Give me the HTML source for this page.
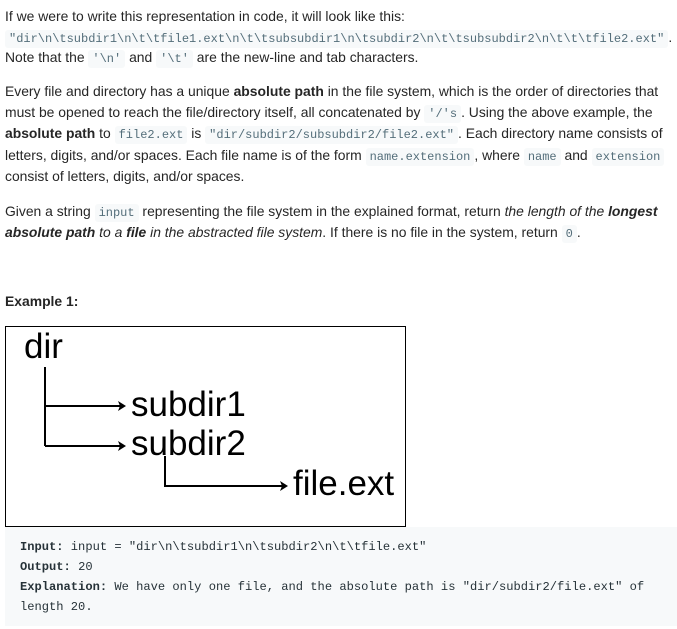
<!DOCTYPE html>
<html><head><style>
body{margin:0;width:677px;height:629px;background:#fff;position:relative;overflow:hidden;font-family:"Liberation Sans",sans-serif;font-size:13.9px;color:#262626;}
.l{position:absolute;left:5px;white-space:nowrap;line-height:20px;letter-spacing:0;}
code{font-family:"Liberation Mono",monospace;font-size:12px;color:#546e7a;background:#f7f9fa;border-radius:3px;padding:2px 4px;letter-spacing:0;}
b{color:#262626}
.pre{position:absolute;left:5px;top:527px;width:672px;height:99px;background:#f7f9fa;font-family:"Liberation Mono",monospace;font-size:12.1px;color:#263238;}
.pre div{position:absolute;left:15px;white-space:nowrap;line-height:20px}
.pre b{color:#263238}
</style></head><body>
<div class="l" style="top:6px">If we were to write this representation in code, it will look like this:</div>
<div class="l" style="top:27px"><code>"dir\n\tsubdir1\n\t\tfile1.ext\n\t\tsubsubdir1\n\tsubdir2\n\t\tsubsubdir2\n\t\t\tfile2.ext"</code>.</div>
<div class="l" style="top:47px">Note that the <code>'\n'</code> and <code>'\t'</code> are the new-line and tab characters.</div>
<div class="l" style="top:81px">Every file and directory has a unique <b>absolute path</b> in the file system, which is the order of directories that</div>
<div class="l" style="top:102px">must be opened to reach the file/directory itself, all concatenated by <code>'/'s</code>. Using the above example, the</div>
<div class="l" style="top:123px"><b>absolute path</b> to <code>file2.ext</code> is <code>"dir/subdir2/subsubdir2/file2.ext"</code>. Each directory name consists of</div>
<div class="l" style="top:145px">letters, digits, and/or spaces. Each file name is of the form <code>name.extension</code>, where <code>name</code> and <code>extension</code></div>
<div class="l" style="top:166px">consist of letters, digits, and/or spaces.</div>
<div class="l" style="top:201px">Given a string <code>input</code> representing the file system in the explained format, return <i>the length of the <b>longest</b></i></div>
<div class="l" style="top:222px"><i><b>absolute path</b> to a <b>file</b> in the abstracted file system</i>. If there is no file in the system, return <code>0</code>.</div>
<div class="l" style="top:291px"><b>Example 1:</b></div>
<svg style="position:absolute;left:0;top:0" width="677" height="629">
<rect x="5.5" y="326.5" width="400" height="200" fill="#fff" stroke="#000" stroke-width="1"/>
<g font-family="Liberation Sans,sans-serif" font-size="35" fill="#000">
<text x="24" y="358">dir</text>
<text x="131" y="416">subdir1</text>
<text x="131" y="455">subdir2</text>
<text x="293" y="495">file.ext</text>
</g>
<g stroke="#000" stroke-width="2" fill="none">
<path d="M45 367V446"/><path d="M45 406H120"/><path d="M45 446H120"/>
<path d="M165 456V486H282"/>
</g>
<g fill="#000">
<path d="M126 406l-8-5 2 5-2 5z"/><path d="M126 446l-8-5 2 5-2 5z"/><path d="M288 486l-8-5 2 5-2 5z"/>
</g>
</svg>
<div class="pre">
<div style="top:10px"><b>Input:</b> input = "dir\n\tsubdir1\n\tsubdir2\n\t\tfile.ext"</div>
<div style="top:30px"><b>Output:</b> 20</div>
<div style="top:50px"><b>Explanation:</b> We have only one file, and the absolute path is "dir/subdir2/file.ext" of</div>
<div style="top:70px">length 20.</div>
</div>
</body></html>
